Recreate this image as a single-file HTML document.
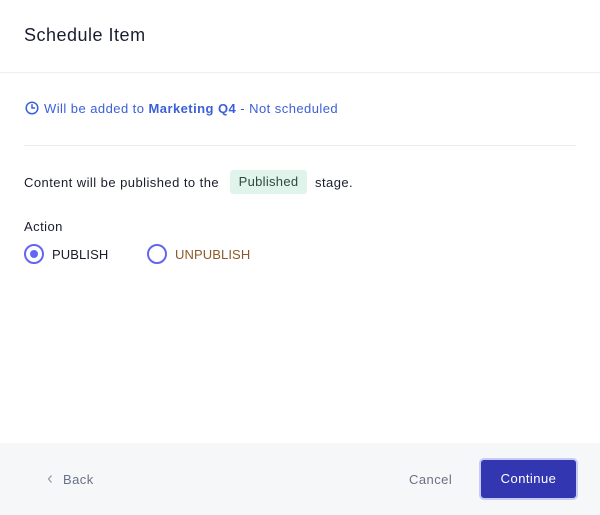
<!DOCTYPE html>
<html><head><style>
*{box-sizing:border-box;margin:0;padding:0}
body{width:600px;height:515px;background:#fff;font-family:"Liberation Sans",sans-serif;position:relative;overflow:hidden;color:#1a1d2e;letter-spacing:0.45px}
.t{position:absolute;white-space:nowrap}
</style></head><body>
<div class="t" style="left:24px;top:25px;font-size:18px;color:#1a1d2e;letter-spacing:0.5px">Schedule Item</div>
<div style="position:absolute;left:0;top:72px;width:600px;height:1px;background:#eceef2"></div>
<svg style="position:absolute;left:25px;top:101px" width="14" height="14" viewBox="0 0 14 14"><circle cx="7" cy="7" r="5.8" fill="none" stroke="#3b5fd9" stroke-width="1.5"/><path d="M7 3.8V7H9.5" fill="none" stroke="#3b5fd9" stroke-width="1.5" stroke-linecap="round"/></svg>
<div class="t" style="left:44px;top:101px;font-size:13px;color:#3b5fd9">Will be added to <b>Marketing Q4</b> - Not scheduled</div>
<div style="position:absolute;left:24px;top:145px;width:552px;height:1px;background:#e8eaee"></div>
<div class="t" style="left:24px;top:175px;font-size:13px">Content will be published to the</div>
<div class="t" style="left:230px;top:170px;width:77px;height:24px;background:#e0f4ec;border-radius:3px;font-size:13px;color:#2d4a3e;text-align:center;line-height:24px;letter-spacing:0.3px">Published</div>
<div class="t" style="left:315px;top:175px;font-size:13px">stage.</div>
<div class="t" style="left:24px;top:219px;font-size:13px">Action</div>
<div style="position:absolute;left:24px;top:244px;width:20px;height:20px;border:2px solid #6366f1;border-radius:50%"><div style="position:absolute;left:4px;top:4px;width:8px;height:8px;border-radius:50%;background:#6366f1"></div></div>
<div class="t" style="left:52px;top:247px;font-size:13px;letter-spacing:0.1px">PUBLISH</div>
<div style="position:absolute;left:147px;top:244px;width:20px;height:20px;border:2px solid #6366f1;border-radius:50%"></div>
<div class="t" style="left:175px;top:247px;font-size:13px;color:#8b5a2b;letter-spacing:0.1px">UNPUBLISH</div>
<div style="position:absolute;left:0;top:443px;width:600px;height:72px;background:#f6f7f9"></div>
<svg style="position:absolute;left:46px;top:474px" width="8" height="10" viewBox="0 0 8 10"><path d="M5.5 1.5L2.5 5L5.5 8.5" fill="none" stroke="#9096a6" stroke-width="1.2"/></svg>
<div class="t" style="left:63px;top:472px;font-size:13px;color:#6b7186">Back</div>
<div class="t" style="left:409px;top:472px;font-size:13px;color:#6b7186">Cancel</div>
<div style="position:absolute;left:479px;top:458px;width:99px;height:42px;background:#3236b0;border:2px solid #c7caf5;border-radius:5px;color:#fff;font-size:13px;text-align:center;line-height:38px">Continue</div>
</body></html>
